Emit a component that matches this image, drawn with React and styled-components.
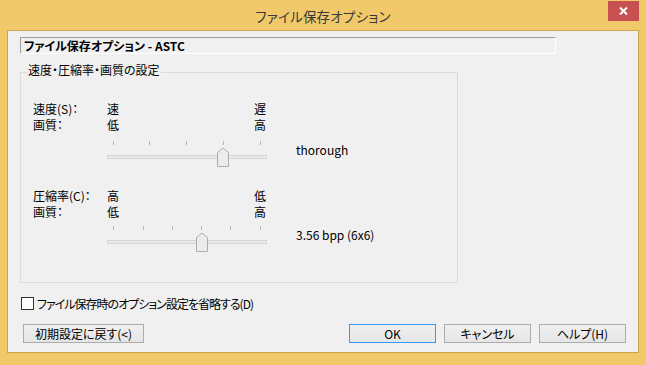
import React from 'react';
import styled, { createGlobalStyle } from 'styled-components';

const FONT = `"Noto Sans CJK JP", "Noto Sans", sans-serif`;

const GlobalStyle = createGlobalStyle`
  html, body { margin: 0; padding: 0; background: #f1c96b; }
  body { font-family: ${FONT}; }
  * { box-sizing: border-box; }
`;

const Window = styled.div`
  width: 646px;
  height: 365px;
  background: #f1c96b;
  display: flex;
  flex-direction: column;
  padding: 0 7px 12px;
  font-family: ${FONT};
  font-feature-settings: "palt";
`;

const TitleBar = styled.div`
  height: 30px;
  display: grid;
  grid-template-columns: 1fr auto 1fr;
  align-items: start;
`;

const Title = styled.div`
  grid-column: 2;
  font-size: 13.5px;
  line-height: 30px;
  padding-top: 1px;
  color: #383838;
  letter-spacing: 0.2px;
`;

const CloseButton = styled.div`
  grid-column: 3;
  justify-self: end;
  margin-top: 1px;
  width: 31px;
  height: 20px;
  background: #c75050;
  display: flex;
  align-items: center;
  justify-content: center;
`;

const Client = styled.div`
  flex: 1;
  border: 1px solid #c9a54f;
  background: #f0f0f0;
  display: flex;
  flex-direction: column;
  padding: 0 0 0 12px;
`;

const HeaderBox = styled.div`
  margin-top: 6px;
  width: 536px;
  height: 17px;
  border-top: 1px solid #a0a0a0;
  border-left: 1px solid #a0a0a0;
  border-right: 1px solid #ffffff;
  border-bottom: 1px solid #ffffff;
  font-size: 12px;
  font-weight: bold;
  line-height: 15px;
  padding-left: 3px;
  color: #000;
`;

const GroupBox = styled.div`
  position: relative;
  margin-top: 18px;
  width: 438px;
  height: 211px;
  border: 1px solid #dcdcdc;
  padding: 28px 0 0 12px;
`;

const Legend = styled.div`
  position: absolute;
  top: -10px;
  left: 6px;
  padding: 0 1px;
  background: #f0f0f0;
  font-size: 12px;
  line-height: 14px;
  color: #000;
`;

const SliderBlock = styled.div`
  display: grid;
  grid-template-columns: 74px 160px auto;
  row-gap: ${p => p.$gap}px;
  margin-top: ${p => p.$top}px;
  font-size: 12px;
  line-height: 16px;
  color: #000;
`;

const LabelCol = styled.div`
  display: flex;
  flex-direction: column;
`;

const EndLabels = styled.div`
  display: flex;
  justify-content: space-between;
  padding-right: 1px;
`;

const EndCol = styled.div`
  display: flex;
  flex-direction: column;
`;

const SliderCell = styled.div`
  grid-column: 2;
  height: 27px;
`;

const Value = styled.div`
  grid-column: 3;
  align-self: start;
  margin-top: 3px;
  padding-left: 29px;
  line-height: 14px;
  font-size: 12px;
  white-space: nowrap;
`;

const CheckRow = styled.div`
  display: flex;
  align-items: center;
  gap: 3px;
  margin-top: 13px;
  margin-left: 1px;
  height: 14px;
  font-size: 12px;
  color: #000;
`;

const CheckLabel = styled.span`
  letter-spacing: -1px;
`;

const CheckBox = styled.div`
  width: 13px;
  height: 13px;
  border: 1px solid #333;
  background: #fff;
`;

const ButtonRow = styled.div`
  display: flex;
  justify-content: space-between;
  align-items: center;
  margin-top: 14px;
  margin-left: 3px;
  padding-right: 12px;
`;

const ButtonGroup = styled.div`
  display: flex;
  gap: 8px;
`;

const Button = styled.div`
  width: ${p => p.$w}px;
  height: 19px;
  border: 1px solid ${p => (p.$focus ? '#3399ff' : '#acacac')};
  background: linear-gradient(#f0f0f0, #e5e5e5);
  display: flex;
  align-items: center;
  justify-content: center;
  font-size: 12px;
  line-height: 14px;
  color: #000;
`;

function Slider({ ticks, thumb }) {
  const L = thumb - 5.5;
  const R = thumb + 5.5;
  return (
    <svg width="160" height="27" viewBox="0 0 160 27" style={{ display: 'block' }}>
      {ticks.map(t => (
        <rect key={t} x={t} y={1} width={1} height={4} fill="#b8b8b8" />
      ))}
      <rect x="0.5" y="15.5" width="159" height="3" fill="#e7eae7" stroke="#d6d6d6" />
      <path
        d={`M${L} 12.5 L${thumb} 8 L${R} 12.5 L${R} 26.5 L${L} 26.5 Z`}
        fill="#ececec"
        stroke="#acacac"
      />
    </svg>
  );
}

function Block({ top, gap, labels, left, right, ticks, thumb, value }) {
  return (
    <SliderBlock $top={top} $gap={gap}>
      <LabelCol>
        {labels.map(l => (
          <span key={l}>{l}</span>
        ))}
      </LabelCol>
      <EndLabels>
        <EndCol>
          {left.map(l => (
            <span key={l}>{l}</span>
          ))}
        </EndCol>
        <EndCol>
          {right.map(l => (
            <span key={l}>{l}</span>
          ))}
        </EndCol>
      </EndLabels>
      <div />
      <div />
      <SliderCell>
        <Slider ticks={ticks} thumb={thumb} />
      </SliderCell>
      <Value>{value}</Value>
    </SliderBlock>
  );
}

export default function App() {
  return (
    <>
      <GlobalStyle />
      <Window>
        <TitleBar>
          <Title>ファイル保存オプション</Title>
          <CloseButton>
            <svg width="9" height="8" viewBox="0 0 9 8">
              <path d="M1 0.5 L8 7.5 M8 0.5 L1 7.5" stroke="#fff" strokeWidth="2" />
            </svg>
          </CloseButton>
        </TitleBar>
        <Client>
          <HeaderBox>ファイル保存オプション - ASTC</HeaderBox>
          <GroupBox>
            <Legend>速度・圧縮率・画質の設定</Legend>
            <Block
              top={0}
              gap={7}
              labels={['速度(S)：', '画質：']}
              left={['速', '低']}
              right={['遅', '高']}
              ticks={[6, 42, 79, 116, 153]}
              thumb={116}
              value="thorough"
            />
            <Block
              top={21}
              gap={5}
              labels={['圧縮率(C)：', '画質：']}
              left={['高', '低']}
              right={['低', '高']}
              ticks={[6, 36, 65, 94, 123, 153]}
              thumb={95}
              value="3.56 bpp (6x6)"
            />
          </GroupBox>
          <CheckRow>
            <CheckBox />
            <CheckLabel>ファイル保存時のオプション設定を省略する(D)</CheckLabel>
          </CheckRow>
          <ButtonRow>
            <Button $w={121}>初期設定に戻す(&lt;)</Button>
            <ButtonGroup>
              <Button $w={87} $focus>OK</Button>
              <Button $w={87}>キャンセル</Button>
              <Button $w={87}>ヘルプ(H)</Button>
            </ButtonGroup>
          </ButtonRow>
        </Client>
      </Window>
    </>
  );
}
